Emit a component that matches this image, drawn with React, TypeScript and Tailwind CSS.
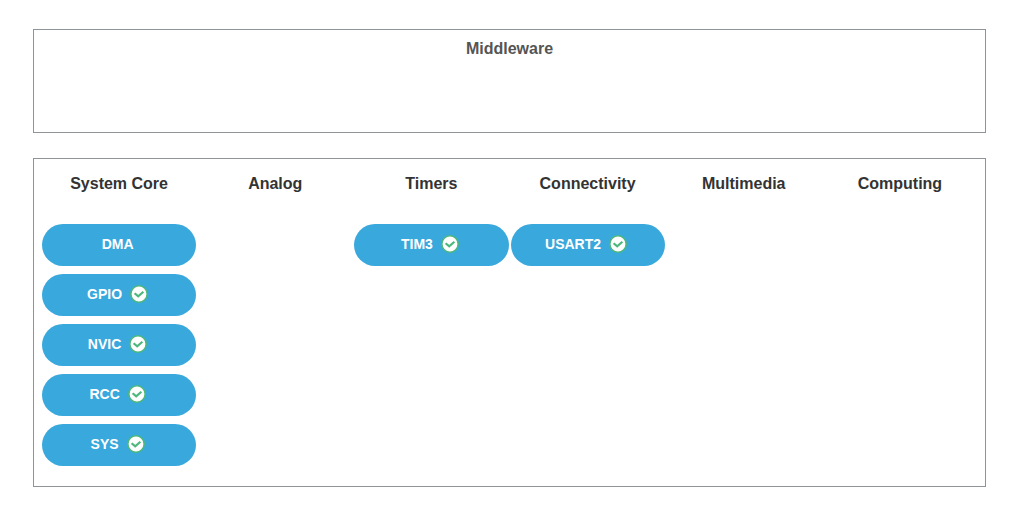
import React from "react";

type Peripheral = { name: string; configured: boolean };
type Category = { title: string; items: Peripheral[] };

const categories: Category[] = [
  {
    title: "System Core",
    items: [
      { name: "DMA", configured: false },
      { name: "GPIO", configured: true },
      { name: "NVIC", configured: true },
      { name: "RCC", configured: true },
      { name: "SYS", configured: true },
    ],
  },
  { title: "Analog", items: [] },
  { title: "Timers", items: [{ name: "TIM3", configured: true }] },
  { title: "Connectivity", items: [{ name: "USART2", configured: true }] },
  { title: "Multimedia", items: [] },
  { title: "Computing", items: [] },
];

function CheckBadge() {
  return (
    <svg className="size-[18px] shrink-0" viewBox="0 0 18 18" fill="none" aria-hidden="true">
      <circle cx="9" cy="9" r="8.2" fill="#ffffff" stroke="#4db87c" strokeWidth="1.6" />
      <path d="M4.6 8.2L8.2 11.4L13.4 6.8" stroke="#4db87c" strokeWidth="2.2" />
    </svg>
  );
}

function PeripheralButton({ name, configured }: Peripheral) {
  return (
    <button
      type="button"
      className="flex h-[42px] w-full items-center justify-center gap-2 rounded-full bg-[#39a8dc] pr-[3px] pb-0.5 text-sm font-bold text-white"
    >
      <span>{name}</span>
      {configured && <CheckBadge />}
    </button>
  );
}

export default function App() {
  return (
    <main className="bg-white pt-[29px] pr-[38px] pb-[34px] pl-[33px] font-['Liberation_Sans',Arial,sans-serif]">
      <section className="min-h-[104px] border border-[#8f9499] pt-[7px]">
        <h2 className="text-center text-base font-bold text-[#555555]">Middleware</h2>
      </section>
      <section className="mt-[25px] grid min-h-[329px] grid-cols-6 gap-0.5 border border-[#8f9499] px-2 pt-[13px] pb-5">
        {categories.map((category) => (
          <div key={category.title}>
            <h2 className="text-center text-base font-bold text-[#333333]">{category.title}</h2>
            <div className="mt-7 flex flex-col gap-2">
              {category.items.map((item) => (
                <PeripheralButton key={item.name} {...item} />
              ))}
            </div>
          </div>
        ))}
      </section>
    </main>
  );
}
